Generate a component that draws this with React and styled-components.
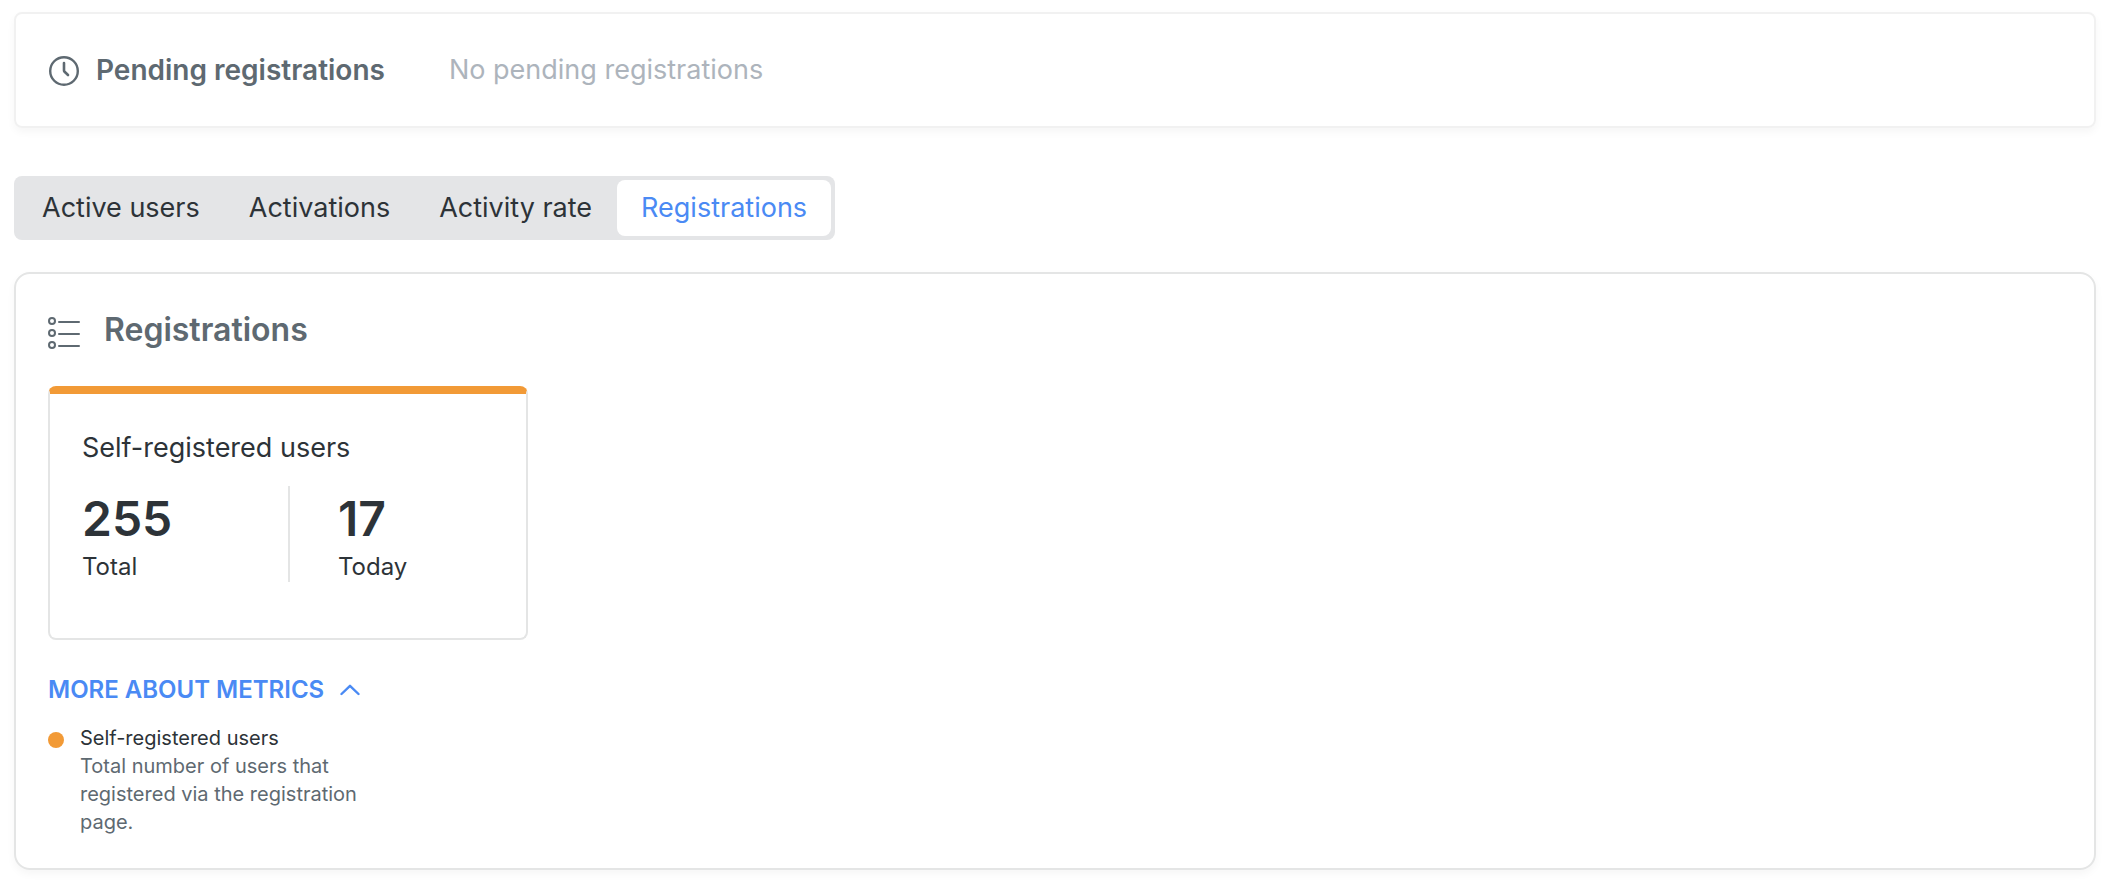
import React, { useState } from 'react'
import styled, { createGlobalStyle } from 'styled-components'

const GlobalStyle = createGlobalStyle`
	* {
		box-sizing: border-box;
	}
	body {
		margin: 0;
		background: #fff;
		color: #2d3338;
		font-family: Inter, 'Liberation Sans', sans-serif;
		font-size: 27px;
		line-height: 40px;
	}
	button {
		font: inherit;
		border: none;
		cursor: pointer;
	}
	h2,
	h3,
	p,
	dl,
	dd {
		margin: 0;
	}
`

const Page = styled.main`
	display: flex;
	flex-direction: column;
	align-items: stretch;
	padding: 12px 24px 16px 14px;
`

const PendingCard = styled.section`
	display: flex;
	align-items: center;
	padding: 36px 32px;
	border: 2px solid #f1f1f1;
	border-radius: 8px;
	box-shadow: 0 4px 8px rgba(0, 0, 0, 0.04);

	svg {
		flex: none;
		margin-right: 16px;
	}
`

const PendingTitle = styled.h2`
	margin-right: 64px;
	color: #5e6971;
	font-size: 28px;
	font-weight: 600;
`

const PendingText = styled.p`
	color: #adb4bc;
`

const Tabs = styled.div`
	display: flex;
	align-self: flex-start;
	gap: 1px;
	margin: 48px 0 32px;
	padding: 4px;
	border-radius: 8px;
	background: #e4e5e7;
`

const Tab = styled.button`
	padding: 8px 24px;
	border-radius: 8px;
	background: ${(props) => (props.$active ? '#fff' : 'transparent')};
	color: ${(props) => (props.$active ? '#4a8af4' : '#2d3338')};
`

const Panel = styled.section`
	display: flex;
	flex-direction: column;
	align-items: flex-start;
	padding: 36px 32px 32px;
	border: 2px solid #e4e5e5;
	border-radius: 16px;
	box-shadow: 0 4px 8px rgba(0, 0, 0, 0.04);
`

const PanelHeader = styled.header`
	display: flex;
	align-items: center;
	gap: 24px;
	margin-bottom: 36px;
	color: #5e6971;
`

const PanelTitle = styled.h2`
	font-size: 32px;
	font-weight: 600;
`

const MetricCard = styled.article`
	width: 480px;
	max-width: 100%;
	padding: 0 32px 56px;
	border: 2px solid #e4e5e5;
	border-top: 8px solid #f29a36;
	border-radius: 8px;
`

const MetricTitle = styled.h3`
	margin: 34px 0 18px;
	font-size: 27px;
	font-weight: 400;
`

const MetricValues = styled.div`
	display: grid;
	grid-template-columns: 1fr 1fr;
`

const Metric = styled.div`
	display: flex;
	flex-direction: column;
	padding-left: ${(props) => (props.$divided ? '48px' : '0')};
	border-left: ${(props) => (props.$divided ? '2px solid #e4e5e5' : 'none')};

	strong {
		font-size: 48px;
		font-weight: 600;
		line-height: 66px;
	}
	span {
		font-size: 24px;
		line-height: 30px;
	}
`

const MoreButton = styled.button`
	display: flex;
	align-items: center;
	gap: 16px;
	margin-top: 34px;
	padding: 0;
	background: none;
	color: #4a8af4;
	font-size: 24px;
	font-weight: 600;
	line-height: 32px;
	text-transform: uppercase;

	svg {
		transform: ${(props) => (props.$open ? 'none' : 'rotate(180deg)')};
	}
`

const Legend = styled.dl`
	width: 324px;
	margin-top: 18px;
	padding-left: 32px;
	font-size: 20px;
	line-height: 28px;

	dt {
		display: flex;
		align-items: center;
		gap: 16px;
		margin-left: -32px;
	}
	dd {
		color: #5e6971;
	}
`

const Dot = styled.i`
	width: 16px;
	height: 16px;
	margin-top: 4px;
	border-radius: 50%;
	background: #f29a36;
`

const ClockIcon = () => (
	<svg width="32" height="32" viewBox="0 0 32 32" fill="none" stroke="#5e6971" aria-hidden="true">
		<circle cx="16" cy="17" r="13.8" strokeWidth="2.4" />
		<path d="M16 9v7.4q0 .8.6 1.4l3.4 3.2" strokeWidth="2.6" strokeLinecap="round" />
	</svg>
)

const ListIcon = () => (
	<svg width="32" height="40" viewBox="0 0 32 40" fill="none" stroke="currentColor" strokeWidth="2" aria-hidden="true">
		{[11, 23, 35].map((y) => (
			<g key={y}>
				<circle cx="4" cy={y} r="3" />
				<path d={`M11 ${y + 1}H31`} strokeLinecap="round" />
			</g>
		))}
	</svg>
)

const ChevronIcon = () => (
	<svg width="20" height="12" viewBox="0 0 20 12" fill="none" stroke="currentColor" aria-hidden="true">
		<path d="M1.5 10 10 1.8l8.5 8.2" strokeWidth="2.4" strokeLinecap="round" strokeLinejoin="round" />
	</svg>
)

const tabs = ['Active users', 'Activations', 'Activity rate', 'Registrations']

export default function App() {
	const [activeTab, setActiveTab] = useState('Registrations')
	const [open, setOpen] = useState(true)

	return (
		<Page>
			<GlobalStyle />
			<PendingCard>
				<ClockIcon />
				<PendingTitle>Pending registrations</PendingTitle>
				<PendingText>No pending registrations</PendingText>
			</PendingCard>
			<Tabs role="tablist">
				{tabs.map((tab) => (
					<Tab
						key={tab}
						type="button"
						role="tab"
						aria-selected={tab === activeTab}
						$active={tab === activeTab}
						onClick={() => setActiveTab(tab)}
					>
						{tab}
					</Tab>
				))}
			</Tabs>
			<Panel>
				<PanelHeader>
					<ListIcon />
					<PanelTitle>{activeTab}</PanelTitle>
				</PanelHeader>
				<MetricCard>
					<MetricTitle>Self-registered users</MetricTitle>
					<MetricValues>
						<Metric>
							<strong>255</strong>
							<span>Total</span>
						</Metric>
						<Metric $divided>
							<strong>17</strong>
							<span>Today</span>
						</Metric>
					</MetricValues>
				</MetricCard>
				<MoreButton type="button" aria-expanded={open} $open={open} onClick={() => setOpen(!open)}>
					More about metrics
					<ChevronIcon />
				</MoreButton>
				{open ? (
					<Legend>
						<dt>
							<Dot />
							Self-registered users
						</dt>
						<dd>Total number of users that registered via the registration page.</dd>
					</Legend>
				) : null}
			</Panel>
		</Page>
	)
}
